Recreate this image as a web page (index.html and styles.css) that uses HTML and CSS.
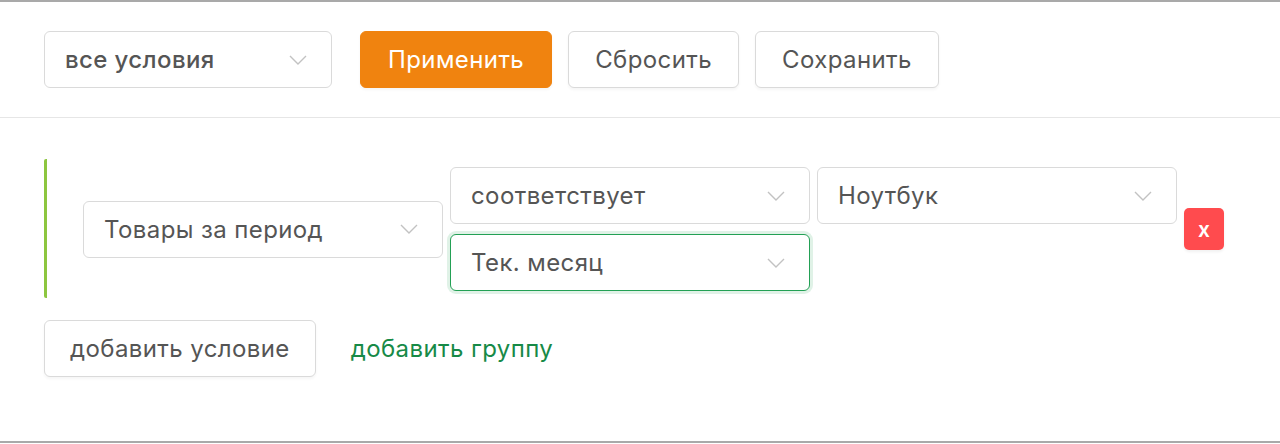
FILE: index.html
```html
<!DOCTYPE html>
<html lang="ru">
<head>
    <meta charset="UTF-8">
    <meta name="viewport" content="width=device-width, initial-scale=1.0">
    <title>Фильтр</title>
    <link rel="stylesheet" href="styles.css">
</head>
<body>
    <div class="panel">
        <div class="toolbar">
            <div class="select select-mode">
                <span>все условия</span>
                <svg class="chevron" width="18" height="10" viewBox="0 0 18 10"><path d="M1 1l8 8 8-8" fill="none" stroke="#c2c2c2" stroke-width="1.4"/></svg>
            </div>
            <button class="btn btn-primary">Применить</button>
            <button class="btn">Сбросить</button>
            <button class="btn">Сохранить</button>
        </div>

        <div class="filters">
            <!-- condition group -->
            <div class="group">
                <div class="select">
                    <span>Товары за период</span>
                    <svg class="chevron" width="18" height="10" viewBox="0 0 18 10"><path d="M1 1l8 8 8-8" fill="none" stroke="#c2c2c2" stroke-width="1.4"/></svg>
                </div>
                <div class="stack">
                    <div class="select">
                        <span>соответствует</span>
                        <svg class="chevron" width="18" height="10" viewBox="0 0 18 10"><path d="M1 1l8 8 8-8" fill="none" stroke="#c2c2c2" stroke-width="1.4"/></svg>
                    </div>
                    <div class="select select-active">
                        <span>Тек. месяц</span>
                        <svg class="chevron" width="18" height="10" viewBox="0 0 18 10"><path d="M1 1l8 8 8-8" fill="none" stroke="#c2c2c2" stroke-width="1.4"/></svg>
                    </div>
                </div>
                <div class="stack stack-top">
                    <div class="select">
                        <span>Ноутбук</span>
                        <svg class="chevron" width="18" height="10" viewBox="0 0 18 10"><path d="M1 1l8 8 8-8" fill="none" stroke="#c2c2c2" stroke-width="1.4"/></svg>
                    </div>
                </div>
                <button class="remove">x</button>
            </div>

            <div class="actions">
                <button class="btn btn-add">добавить условие</button>
                <a class="link" href="#">добавить группу</a>
            </div>
        </div>
    </div>
</body>
</html>
```

FILE: styles.css
```css
* {
    margin: 0;
    padding: 0;
    box-sizing: border-box;
}

body {
    font-family: 'Inter', 'Noto Sans', sans-serif;
    background: #fff;
    color: #555;
    letter-spacing: 0.4px;
}

.panel {
    border-top: 2px solid #a9a9a9;
    border-bottom: 2px solid #a9a9a9;
    height: 443px;
}

/* Top toolbar */
.toolbar {
    display: flex;
    align-items: center;
    padding: 29px 44px 29px;
    border-bottom: 1px solid #e6e6e6;
}

.select {
    display: flex;
    align-items: center;
    justify-content: space-between;
    width: 360px;
    height: 57px;
    padding: 0 24px 0 20px;
    border: 1px solid #dadada;
    border-radius: 6px;
    background: #fff;
    font-size: 24px;
    color: #555;
}

.select-mode {
    width: 288px;
    font-weight: 500;
    margin-right: 28px;
}

.select-active {
    border-color: #23a055;
    box-shadow: 0 0 0 3px rgba(35, 160, 85, 0.14);
}

.chevron {
    flex-shrink: 0;
}

.btn {
    height: 57px;
    padding: 0 26px;
    border: 1px solid #dadada;
    border-radius: 6px;
    background: #fff;
    font-family: inherit;
    font-size: 24px;
    letter-spacing: inherit;
    color: #555;
    box-shadow: 0 2px 3px rgba(0, 0, 0, 0.04);
    margin-right: 16px;
}

.btn-primary {
    background: #f0830f;
    border-color: #f0830f;
    color: #fff;
    padding: 0 27px;
}

/* Conditions */
.filters {
    padding: 41px 44px 0;
}

.group {
    display: flex;
    align-items: center;
    gap: 7px;
    border-left: 3px solid #8dc63f;
    border-radius: 2px;
    padding: 8px 0 7px 36px;
}

.stack {
    display: flex;
    flex-direction: column;
    gap: 10px;
}

.stack-top {
    align-self: flex-start;
}

.remove {
    width: 40px;
    height: 42px;
    border: none;
    border-radius: 5px;
    background: #ff4b4e;
    color: #fff;
    font-family: inherit;
    font-size: 21px;
    font-weight: 600;
    letter-spacing: 0;
    box-shadow: 0 2px 3px rgba(0, 0, 0, 0.06);
}

.actions {
    display: flex;
    align-items: center;
    margin-top: 22px;
}

.btn-add {
    padding: 0 25px;
    margin-right: 35px;
}

.link {
    font-size: 24px;
    color: #178a47;
    text-decoration: none;
}
```
